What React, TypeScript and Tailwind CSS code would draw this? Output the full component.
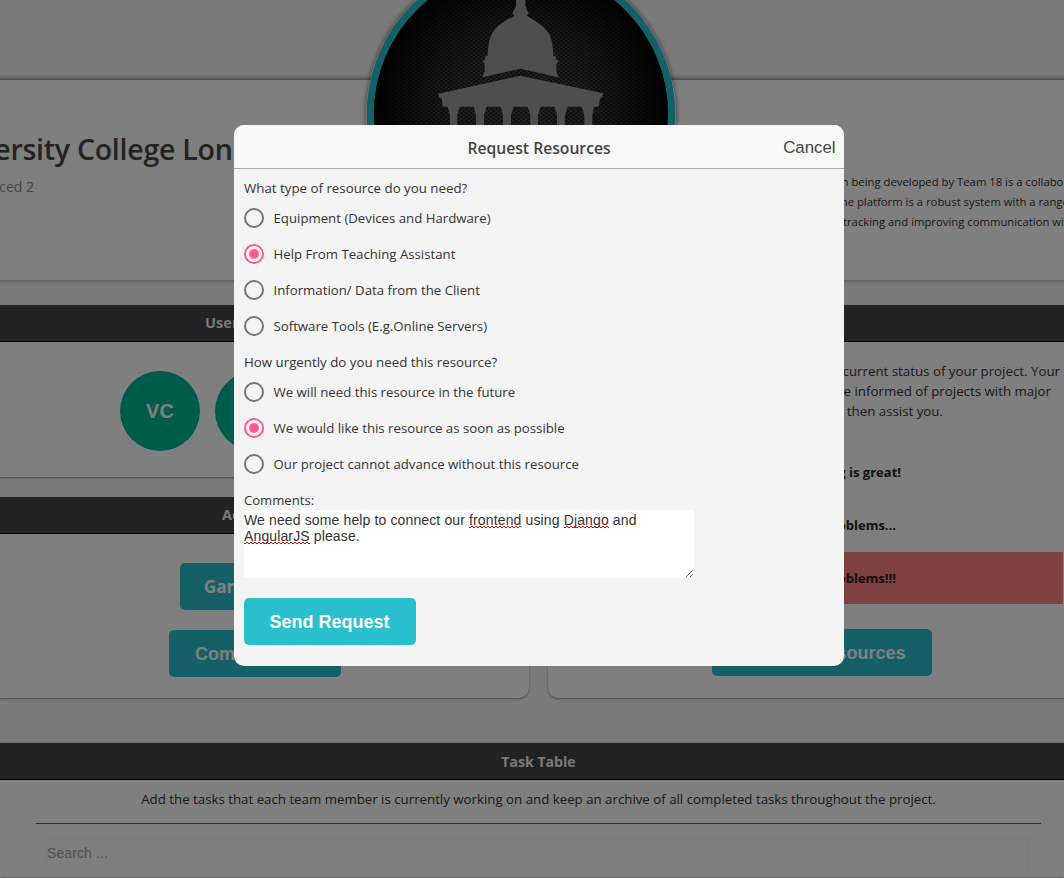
import React from "react";

const resourceTypes = [
  "Equipment (Devices and Hardware)",
  "Help From Teaching Assistant",
  "Information/ Data from the Client",
  "Software Tools (E.g.Online Servers)",
];

const urgencies = [
  "We will need this resource in the future",
  "We would like this resource as soon as possible",
  "Our project cannot advance without this resource",
];

function Logo() {
  return (
    <svg
      className="absolute left-[366px] -top-[41px] h-[310px] w-[310px] rounded-full shadow-[0_0_5px_rgba(0,0,0,0.6)]"
      viewBox="78 -123 930 930"
    >
      <defs>
        <pattern id="mesh" width="15" height="12" patternUnits="userSpaceOnUse">
          <rect width="15" height="12" fill="#444" />
          <ellipse cx="3.75" cy="3" rx="4.4" ry="2.7" fill="#1a1a1a" />
          <ellipse cx="11.25" cy="9" rx="4.4" ry="2.7" fill="#1a1a1a" />
        </pattern>
        <radialGradient id="vignette" cx="0.5" cy="0.5" r="0.5">
          <stop offset="0" stopColor="#000" stopOpacity="0" />
          <stop offset="0.45" stopColor="#000" stopOpacity="0.1" />
          <stop offset="0.8" stopColor="#000" stopOpacity="0.6" />
          <stop offset="1" stopColor="#000" stopOpacity="0.98" />
        </radialGradient>
      </defs>
      <circle cx="543" cy="342" r="463" fill="#2abfcc" />
      <circle cx="543" cy="342" r="441" fill="url(#mesh)" />
      <circle cx="543" cy="342" r="441" fill="url(#vignette)" />
      <g fill="#9c9c9c">
        <path d="M528 -60 V18 L517 40 L523 47 C500 60 470 76 455 103 C446 122 444 142 443 168 L436 168 L435 179 L427 183 L434 192 L434 214 L427 232 L541.5 206 L655 232 L649 214 L649 192 L656 183 L648 179 L647 168 L640 168 C639 142 637 122 628 103 C613 76 583 60 560 47 L566 40 L556 18 V-60 Z" />
        <path d="M541.5 227 L789 280 L787 292 L780 295 L776 320 L762 320 L757 345 V420 H733 V345 L725 320 H683 L675 345 V420 H651 V345 L644 320 H602 L594 345 V420 H571 V345 L563 320 H521 L513 345 V420 H489 V345 L482 320 H440 L432 345 V420 H408 V345 L401 320 H359 L352 345 V420 H330 V345 L323 320 H308 L305 295 L297 291 L295 281 Z" />
      </g>
    </svg>
  );
}

function Bar({ children }: { children?: React.ReactNode }) {
  return (
    <div className="flex h-[37px] shrink-0 items-center border-b border-black bg-[#444] text-[14.6px] font-bold text-white/95">
      {children}
    </div>
  );
}

function TailLine({ hidden, tail, className }: { hidden: string; tail: string; className: string }) {
  return (
    <div className={"flex h-5 items-center whitespace-pre " + className}>
      <span className="flex shrink-0 justify-end overflow-hidden">{hidden}</span>
      <span>{tail}</span>
    </div>
  );
}

function Choice({ label, checked }: { label: string; checked: boolean }) {
  return (
    <label className="flex h-5 items-center gap-[9.5px] text-[13.22px]">
      <span
        className={
          "flex size-5 shrink-0 items-center justify-center rounded-full border-2 " +
          (checked ? "border-[#ff5a92]" : "border-[#757575]")
        }
      >
        {checked && <span className="size-2.5 rounded-full bg-[#ff5a92]" />}
      </span>
      <span className="pt-0.5">{label}</span>
    </label>
  );
}

const button =
  "flex h-[47px] shrink-0 items-center justify-center rounded-[5px] bg-[#2abfcc] pt-0.5 pr-px font-['Liberation_Sans',sans-serif] text-[18px] font-bold text-white";

const card = "bg-white shadow-[0_1px_2px_rgba(0,0,0,0.4)]";

const squiggle =
  "bg-[linear-gradient(90deg,#f00_50%,transparent_50%),linear-gradient(90deg,transparent_50%,#f00_50%)] bg-[length:4px_1px] bg-[position:0_100%,0_calc(100%-1px)] bg-repeat-x";

export default function App() {
  return (
    <div className="relative h-[878px] w-[1064px] overflow-hidden bg-[#f4f4f4] font-['Open_Sans','Noto_Sans',sans-serif] text-[13.3px] text-[#333]">
      <div className="flex h-full flex-col">
        <header className="-mx-2 mt-20 flex h-[200px] shrink-0 justify-between bg-white px-2 shadow-[0_-1px_5px_rgba(0,0,0,0.6)]">
          <div className="flex w-[232.5px] flex-col items-end pt-[49px]">
            <h1 className="text-[28.6px] leading-10 font-semibold tracking-[-0.3px] whitespace-nowrap text-[#464646]">
              University College Lon
            </h1>
            <p className="mt-px flex h-[34px] w-full items-center pb-0.5 text-[14px] whitespace-nowrap text-[#8a8a8a]">
              <span className="flex w-[34px] shrink-0 justify-end">Year Advanced 2</span>
            </p>
          </div>
          <div className="flex w-[224px] flex-col pt-[92px] text-[11.3px] whitespace-pre">
            <TailLine className="[&>span:first-child]:w-[8.5px]" hidden="n" tail=" being developed by Team 18 is a collaborative" />
            <TailLine className="[&>span:first-child]:w-[14px]" hidden="he" tail=" platform is a robust system with a range of" />
            <TailLine className="[&>span:first-child]:w-[7px]" hidden="t" tail="racking and improving communication with" />
          </div>
        </header>

        <div className="mt-[25px] flex shrink-0 gap-[19px]">
          <div className="flex w-[529px] shrink-0 flex-col">
            <section className={"flex flex-col " + card}>
              <Bar>
                <span className="pl-[205px]">User Team</span>
              </Bar>
              <div className="flex h-[135px] gap-[15px] pt-[29px] pl-[120px]">
                <span className="flex size-20 items-center justify-center rounded-full bg-[#00b894] pb-px font-['Liberation_Sans',sans-serif] text-[20px] font-bold text-white">
                  VC
                </span>
                <span className="size-20 rounded-full bg-[#00b894]" />
                <span className="size-20 rounded-full bg-[#00b894]" />
              </div>
            </section>
            <section className={"mt-5 flex flex-col rounded-br-[10px] " + card}>
              <Bar>
                <span className="pl-[222px]">Activities</span>
              </Bar>
              <div className="flex h-[164px] w-[510px] flex-col items-center gap-5 pt-[29px]">
                <div className={button + " w-[150px]"}>
                  <span className="-mt-0.5 font-['Open_Sans',sans-serif] text-[17.2px]">Gantt Chart</span>
                </div>
                <div className={button + " w-[172px]"}>Communicate</div>
              </div>
            </section>
          </div>

          <section className={"flex h-[393px] w-[548px] shrink-0 flex-col rounded-bl-[10px] " + card}>
            <Bar />
            <div className="flex flex-col pt-5 whitespace-nowrap">
              <p className="flex h-5 w-[512px] items-center justify-end">This shows the current status of your project. Your</p>
              <p className="flex h-5 w-[503px] items-center justify-end">teaching team will be informed of projects with major</p>
              <p className="flex h-5 w-[395px] items-center justify-end">problems and can then assist you.</p>
            </div>
            <div className="mt-[24px] flex w-[516px] flex-col text-[13px] font-bold text-[#222]">
              <div className="flex h-[53px] items-center pt-px pr-[163px]">
                <span className="w-full text-right">Everything is great!</span>
              </div>
              <div className="flex h-[53px] items-center pt-px pr-[168px]">
                <span className="w-full text-right">Some problems...</span>
              </div>
              <div className="flex h-[52px] w-[515px] items-center bg-[#ff8080] pt-px pr-[167px]">
                <span className="w-full text-right">Major problems!!!</span>
              </div>
            </div>
            <div className={button + " mt-[25px] ml-[164px] w-[220px]"}>Request Resources</div>
          </section>
        </div>

        <section className="mt-[45px] flex h-[134px] shrink-0 flex-col bg-white shadow-[0_1px_3px_rgba(0,0,0,0.3)]">
          <Bar>
            <span className="ml-[13px] flex-1 pt-0.5 text-center text-[14.1px]">Task Table</span>
          </Bar>
          <p className="mt-[9px] -mr-[13px] text-center text-[13.27px] leading-5 whitespace-nowrap">
            Add the tasks that each team member is currently working on and keep an archive of all completed tasks
            throughout the project.
          </p>
          <div className="mt-3.5 mr-[23px] ml-9 h-px shrink-0 bg-[#4a6272]" />
          <div className="mt-3.5 mr-[35px] ml-[46px] flex h-[34px] shrink-0 items-center border border-b-0 border-[#f9f9f9] border-t-[#f2f2f2] font-['Liberation_Sans',sans-serif] text-[14px] tracking-[0.1px] text-[#a2a2a2]">
            <span className="-mt-1">Search ...</span>
          </div>
        </section>
      </div>

      <Logo />

      <div className="absolute inset-0 flex bg-black/50 pt-[125px] pl-[234px]">
        <div className="flex h-[541px] w-[610px] flex-col overflow-hidden rounded-[10px] bg-[#f4f4f4]">
          <div className="flex h-11 shrink-0 items-center border-b border-[#aaa] bg-[#f8f8f8] text-[#444]">
            <span className="w-[92px]" />
            <h2 className="flex-1 pt-[4px] text-center text-[15.7px] font-semibold">Request Resources</h2>
            <span className="w-[92px] pt-0.5 pr-[8.5px] text-right font-['Liberation_Sans',sans-serif] text-[16.8px]">
              Cancel
            </span>
          </div>
          <div className="flex flex-col px-2.5 pt-[9px]">
            <p className="h-5 leading-5">What type of resource do you need?</p>
            <div className="mt-2.5 flex flex-col gap-4">
              {resourceTypes.map((label, i) => (
                <Choice key={label} label={label} checked={i === 1} />
              ))}
            </div>
            <p className="mt-4 h-5 leading-5">How urgently do you need this resource?</p>
            <div className="mt-2.5 flex flex-col gap-4">
              {urgencies.map((label, i) => (
                <Choice key={label} label={label} checked={i === 1} />
              ))}
            </div>
            <p className="mt-4 h-5 text-[13.1px] leading-5">Comments:</p>
            <div className="relative h-[68px] w-[450px] bg-white pt-[2px] font-['Liberation_Sans',sans-serif] text-[14px] leading-4 tracking-[0.13px]">
              We need some help to connect our <span className={squiggle}>frontend</span> using{" "}
              <span className={squiggle}>Django</span> and
              <br />
              <span className={squiggle}>AngularJS</span> please.
              <svg className="absolute right-0 bottom-0 size-[9px]" viewBox="0 0 9 9" stroke="#555" strokeWidth="0.9">
                <path d="M1 8 L8 1 M5 8 L8 5" />
              </svg>
            </div>
            <button className={button + " mt-5 w-[172px]"}>Send Request</button>
          </div>
        </div>
      </div>
    </div>
  );
}
